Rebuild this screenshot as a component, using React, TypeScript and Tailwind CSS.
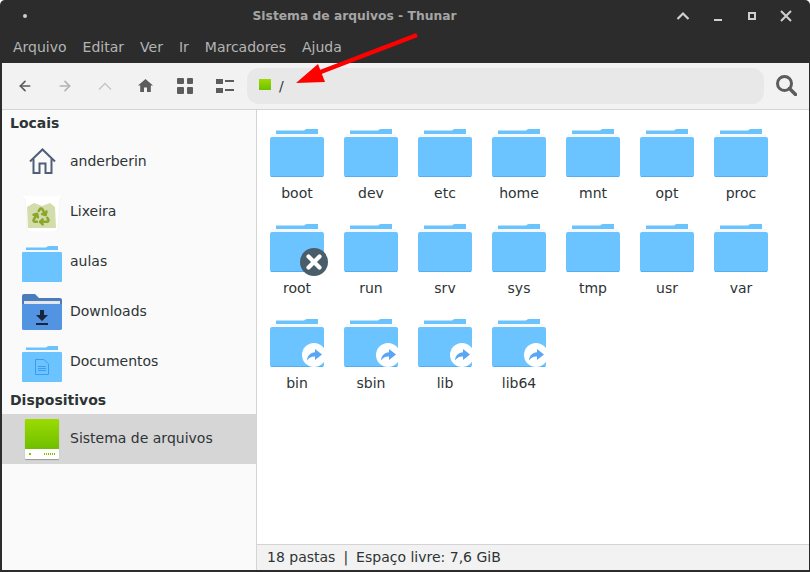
import React from "react";
import { ArrowLeft, ArrowRight, Recycle } from "lucide-react";

const Folder = ({ badge }: { badge?: "x" | "link" }) => (
  <div className="relative w-[54px] h-[48px]">
    <svg width="54" height="48" viewBox="0 0 54 48">
      <path d="M6 1.500 H34 Q35 0 37 0 H48 V5 H6 Z" fill="#6ac3fd" />
      <rect x="2" y="5" width="50" height="3" fill="#f6f7f8" />
      <path d="M0 10 Q0 8 2 8 H52 Q54 8 54 10 V46 Q54 48 52 48 H2 Q0 48 0 46 Z" fill="#6bc4ff" />
      <rect x="1" y="47" width="52" height="1" fill="#55aef2" />
    </svg>
    {badge === "x" && (
      <svg className="absolute left-[30px] top-[24px]" width="28" height="28" viewBox="0 0 28 28">
        <circle cx="14" cy="14" r="14" fill="#4a5d6b" />
        <path d="M8.500 8.500 L19.500 19.500 M19.500 8.500 L8.500 19.500" stroke="#fff" strokeWidth="4.2" strokeLinecap="round" />
      </svg>
    )}
    {badge === "link" && (
      <svg className="absolute left-[32px] top-[24px]" width="24" height="24" viewBox="0 0 24 24">
        <circle cx="12" cy="12" r="12" fill="#fff" />
        <path d="M13 6 L20 11.500 L13 17 V13.600 C9.500 13.400 7 14.600 5 17.500 C5.400 12.600 8.400 9.600 13 9.300 Z" fill="#5aa6f5" />
      </svg>
    )}
  </div>
);

const SmallFolder = ({ children }: { children?: React.ReactNode }) => (
  <div className="relative w-[40px] h-[36px] mt-[6px]">
    <svg width="40" height="36" viewBox="0 0 40 36">
      <path d="M4 1.500 H24 Q25 0 27 0 H36 V4 H4 Z" fill="#6ac3fd" />
      <rect x="1" y="4" width="38" height="2" fill="#f6f7f8" />
      <path d="M0 7 Q0 6 1 6 H39 Q40 6 40 7 V35 Q40 36 39 36 H1 Q0 36 0 35 Z" fill="#6bc4ff" />
    </svg>
    {children}
  </div>
);

const HomeIcon = () => (
  <svg width="27" height="26" viewBox="0 0 27 26" fill="none" stroke="#4f5f78" strokeWidth="2">
    <path d="M1 13.500 L13.500 1.500 L26 13.500" />
    <path d="M4.500 11 V25 H10.500 V15.500 H16.500 V25 H22.500 V11" />
  </svg>
);

const TrashIcon = () => (
  <div className="relative w-[40px] h-[37px] mt-[5px]">
    <svg width="40" height="37" viewBox="0 0 40 37">
      <path d="M0 1 Q0 0 1 0 H39 Q40 0 40 1 V3 L38 4 L36 34 Q36 37 33 37 H8 Q5 37 5 34 L3 4 L0 3 Z" fill="#fff" stroke="#ececec" strokeWidth="0.5" />
      <path d="M5 12 L12 8 L20 11 L28 8 L33 12 L34 33 H6 Z" fill="#d3dcab" />
    </svg>
    <Recycle size={20} strokeWidth={3} className="absolute left-[9px] top-[11px] text-[#8aa62b]" />
  </div>
);

const DownloadsIcon = () => (
  <svg className="mt-[2px]" width="40" height="36" viewBox="0 0 40 36">
    <path d="M0 2 Q0 0 2 0 H13 L17 4 H38 Q40 4 40 6 V12 H0 Z" fill="#4a7cbd" />
    <rect x="2" y="7" width="36" height="3" fill="#e4e7ea" />
    <path d="M0 10 H40 V34.500 Q40 36 38 36 H2 Q0 36 0 34.500 Z" fill="#5294e2" />
    <path d="M18 16 H22 V21 H26 L20 27 L14 21 H18 Z" fill="#17253d" />
    <rect x="14" y="29" width="12" height="2" fill="#17253d" />
  </svg>
);

const DriveIcon = ({ size }: { size: "lg" | "sm" }) =>
  size === "lg" ? (
    <div className="w-[34px] h-[40px] flex flex-col rounded-[1px] overflow-hidden shadow-[0_1px_1px_rgba(0,0,0,0.3)]">
      <div className="h-[30px] bg-gradient-to-b from-[#9bdb00] to-[#6fbf00]" />
      <div className="flex-1 bg-white flex items-center justify-between px-1">
        <div className="w-[2px] h-[2px] bg-[#7fc400]" />
        <div className="w-[11px] h-[2px] bg-[repeating-linear-gradient(90deg,#7fc400_0_1px,transparent_1px_2px)]" />
      </div>
    </div>
  ) : (
    <div className="w-[12px] h-[14px] flex flex-col">
      <div className="h-[11px] bg-gradient-to-b from-[#9bdb00] to-[#6fbf00]" />
      <div className="flex-1 bg-[#e8e8e8]" />
    </div>
  );

const SidebarRow = ({
  icon,
  label,
  selected,
}: {
  icon: React.ReactNode;
  label: string;
  selected?: boolean;
}) => (
  <div className={`h-[50px] flex items-center ${selected ? "bg-[#d6d6d6]" : ""}`}>
    <div className="w-[68px] pl-5 pr-2 flex items-center justify-center shrink-0">{icon}</div>
    <span className={`text-[#2e3436] ${selected ? "pb-[2px]" : ""}`}>{label}</span>
  </div>
);

const rows: { name: string; badge?: "x" | "link" }[] = [
  { name: "boot" },
  { name: "dev" },
  { name: "etc" },
  { name: "home" },
  { name: "mnt" },
  { name: "opt" },
  { name: "proc" },
  { name: "root", badge: "x" },
  { name: "run" },
  { name: "srv" },
  { name: "sys" },
  { name: "tmp" },
  { name: "usr" },
  { name: "var" },
  { name: "bin", badge: "link" },
  { name: "sbin", badge: "link" },
  { name: "lib", badge: "link" },
  { name: "lib64", badge: "link" },
];

export default function App() {
  return (
    <div className="relative w-[810px] h-[572px] overflow-hidden bg-white font-['DejaVu_Sans',sans-serif] text-[14px] leading-[18px]">
      <div className="h-full flex flex-col bg-[#2c2c2c] rounded-t-[5px] pb-[2px]">
        {/* title bar */}
        <div className="h-[32px] flex items-center text-[#a5a5a5] pl-[23px] pr-[18px] shrink-0">
          <div className="w-[4px] h-[4px] rounded-full bg-[#cfcfcf]" />
          <div className="flex-1 text-center font-bold text-[12.300px] pl-[6px]">Sistema de arquivos - Thunar</div>
          <div className="flex items-center gap-[22px]">
            <svg width="14" height="10" viewBox="0 0 14 10" fill="none" stroke="#cfcfcf" strokeWidth="2.2"><path d="M1.500 8 L7 2.500 L12.500 8" /></svg>
            <div className="w-[8px] h-[2px] bg-[#cfcfcf] mt-[7px] mx-[2px]" />
            <div className="w-[8px] h-[8px] border-2 border-[#cfcfcf] mx-[2px]" />
            <svg width="12" height="12" viewBox="0 0 12 12" stroke="#cfcfcf" strokeWidth="2"><path d="M1 1 L11 11 M11 1 L1 11" /></svg>
          </div>
        </div>
        {/* menu bar */}
        <div className="h-[31px] flex items-center gap-4 pl-[13px] pb-[2px] text-[#b4b4b4] shrink-0">
          {["Arquivo", "Editar", "Ver", "Ir", "Marcadores", "Ajuda"].map((m) => (
            <span key={m}>{m}</span>
          ))}
        </div>
        <div className="flex-1 ml-[2px] mr-[1px] flex flex-col bg-white min-h-0">
          {/* toolbar */}
          <div className="h-[47px] shrink-0 flex items-center bg-[#f2f2f2] border-b border-[#d4d4d4] pb-px">
            <div className="flex items-center pl-[15px] w-[245px] shrink-0">
              <ArrowLeft size={16} strokeWidth={2.500} className="text-[#5c5c5c] mr-[24px]" />
              <ArrowRight size={16} strokeWidth={2.500} className="text-[#b3b3b3] mr-[25px]" />
              <svg className="mr-[26px]" width="14" height="8" viewBox="0 0 14 8" fill="none" stroke="#c4c4c4" strokeWidth="1.300"><path d="M1 7.500 L7 1.500 L13 7.500" /></svg>
              <svg className="mr-[24px]" width="15" height="13" viewBox="0 0 15 13" fill="#5c5c5c"><path d="M7.500 0 L15 6.500 H12.800 V13 H9 V8.500 H6 V13 H2.200 V6.500 H0 Z" /></svg>
              <div className="grid grid-cols-2 gap-[3px] mr-[23px]">
                {[0, 1, 2, 3].map((i) => <div key={i} className="w-[6.500px] h-[6.500px] bg-[#5c5c5c] rounded-[1px]" />)}
              </div>
              <div className="grid grid-cols-[7px_9px] gap-x-[2px] gap-y-[4px]">
                <div className="h-[5px] bg-[#5c5c5c]" />
                <div className="h-[2px] bg-[#5c5c5c] mt-[1.500px]" />
                <div className="h-[5px] bg-[#5c5c5c]" />
                <div className="h-[2px] bg-[#5c5c5c] mt-[1.500px]" />
              </div>
            </div>
            <div className="w-[517px] h-[36px] shrink-0 bg-[#e8e8e8] rounded-[12px] flex items-center pl-[12px] gap-[8px]">
              <DriveIcon size="sm" />
              <span className="text-[#2e3436]">/</span>
            </div>
            <svg className="ml-[12px]" width="21" height="21" viewBox="0 0 21 21" fill="none" stroke="#5c5c5c">
              <circle cx="8.500" cy="8.500" r="7" strokeWidth="3" />
              <path d="M13.500 13.500 L19.500 19.500" strokeWidth="3.500" strokeLinecap="round" />
            </svg>
          </div>
          <div className="flex-1 flex min-h-0">
            {/* sidebar */}
            <div className="w-[255px] shrink-0 bg-[#fafafa] border-r border-[#d4d4d4] flex flex-col">
              <div className="h-[26px] flex items-center pl-2 font-bold text-[#2e3436]">Locais</div>
              <SidebarRow icon={<HomeIcon />} label="anderberin" />
              <SidebarRow icon={<TrashIcon />} label="Lixeira" />
              <SidebarRow icon={<SmallFolder />} label="aulas" />
              <SidebarRow icon={<DownloadsIcon />} label="Downloads" />
              <SidebarRow
                icon={
                  <SmallFolder>
                    <svg className="absolute left-[13px] top-[13px]" width="14" height="16" viewBox="0 0 14 16" fill="none" stroke="#3d9bef">
                      <path d="M.500.500 H9 L13.500 5 V15.500 H.500 Z" />
                      <path d="M3 7.500 H11 M3 9.500 H11 M3 11.500 H11" />
                    </svg>
                  </SmallFolder>
                }
                label="Documentos"
              />
              <div className="h-[28px] flex items-center pl-2 font-bold text-[#2e3436]">Dispositivos</div>
              <SidebarRow icon={<DriveIcon size="lg" />} label="Sistema de arquivos" selected />
            </div>
            {/* main */}
            <div className="flex-1 flex flex-col min-w-0">
              <div className="flex-1 pl-[3px] pt-[19px]">
                <div className="grid grid-cols-[repeat(7,74px)] auto-rows-[95px]">
                  {rows.map((r) => (
                    <div key={r.name} className="flex flex-col items-center">
                      <Folder badge={r.badge} />
                      <span className="mt-[7px] text-[#2e3436]">{r.name}</span>
                    </div>
                  ))}
                </div>
              </div>
              <div className="h-[26px] shrink-0 bg-[#f2f2f2] border-t border-[#d4d4d4] flex items-center pl-[10px] pb-[2px] text-[#2e3436]">
                <span>18 pastas</span>
                <span className="mx-[8px]">|</span>
                <span>Espaço livre: 7,6 GiB</span>
              </div>
            </div>
          </div>
        </div>
      </div>
      {/* red annotation arrow */}
      <svg className="absolute left-0 top-0 pointer-events-none" width="810" height="572" viewBox="0 0 810 572">
        <path d="M417 35 L318 73" stroke="#fe0000" strokeWidth="4.500" />
        <path d="M296 83 L318 64 L325 82 Z" fill="#fe0000" />
      </svg>
    </div>
  );
}
